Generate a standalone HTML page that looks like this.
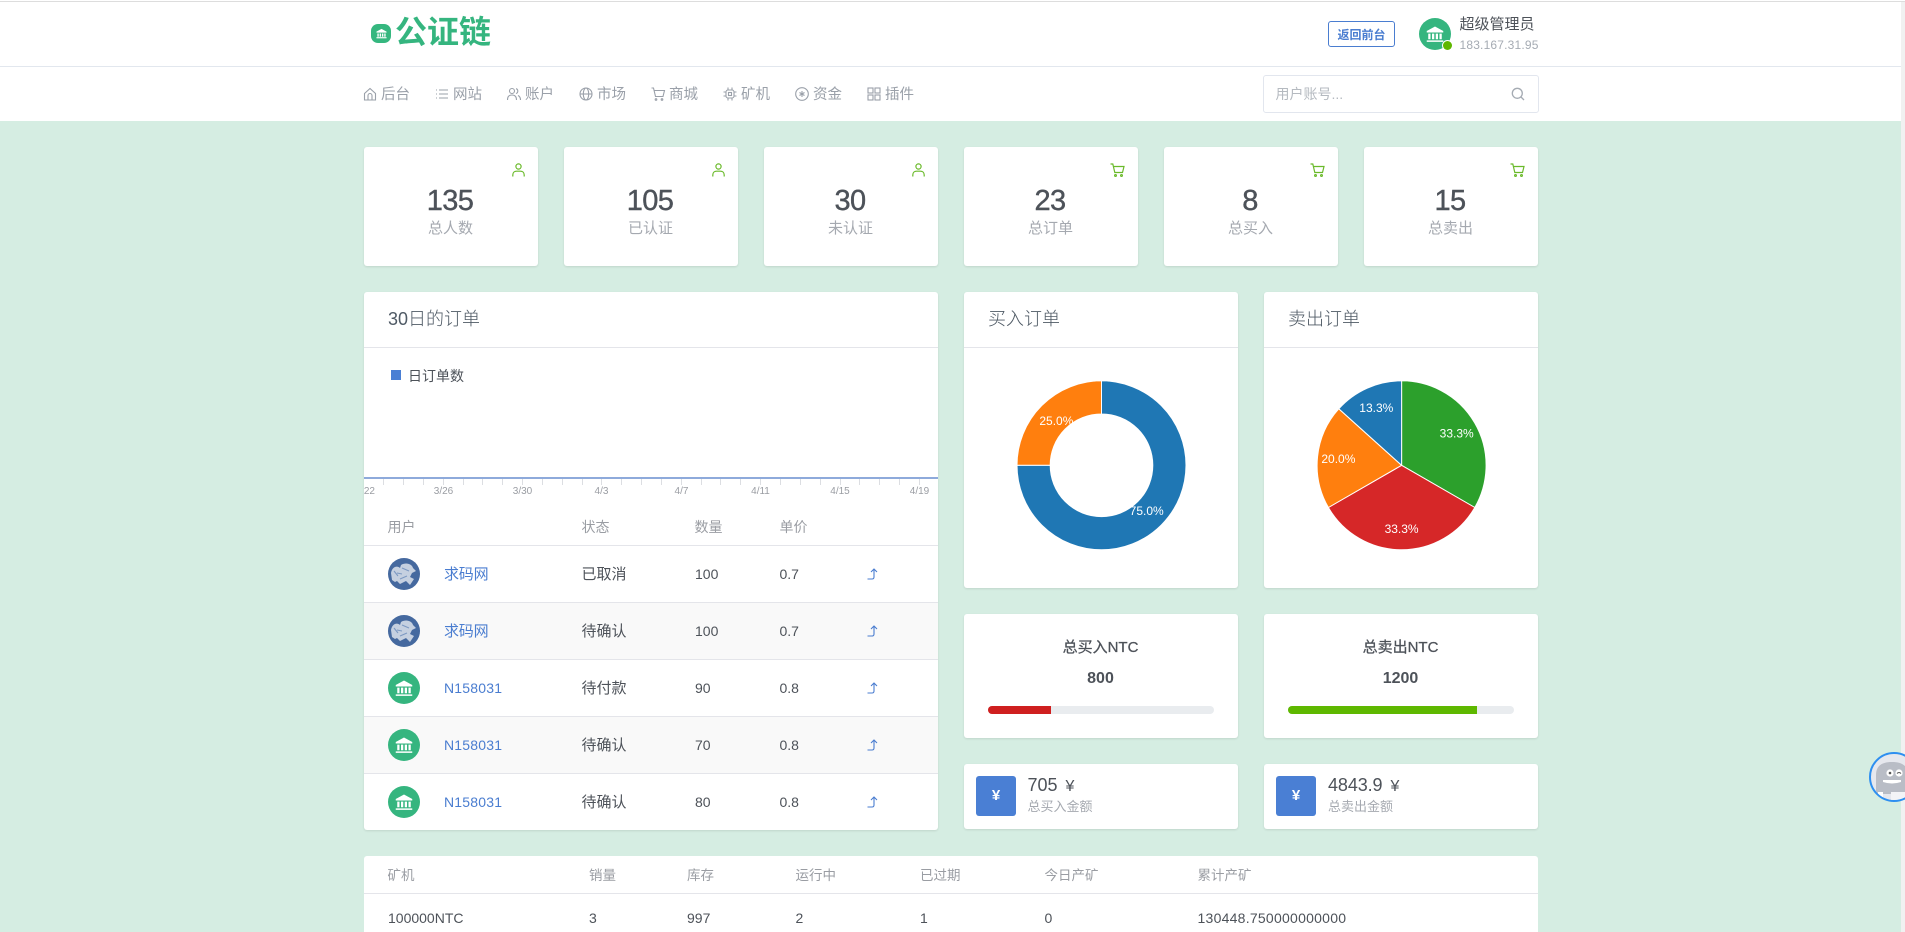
<!DOCTYPE html>
<html lang="zh-CN"><head><meta charset="utf-8"><title>公证链</title>
<style>
*{box-sizing:border-box}
html,body{margin:0;padding:0;width:1905px;height:932px;overflow:hidden;background:#d5ede2;font-family:"Liberation Sans","Noto Sans CJK SC",sans-serif;color:#4d5259}
#p{position:relative;width:1905px;height:932px;overflow:hidden}
.a{position:absolute}
.t{position:absolute;white-space:nowrap;line-height:20px;height:20px}
.c{transform:translateX(-50%)}
.card{position:absolute;background:#fff;border-radius:3px;box-shadow:0 1px 2px rgba(0,0,0,.1)}
.nav{font-size:14.5px;color:#9aa0a9;top:85px}
.num{font-size:29px;letter-spacing:-.6px;line-height:30px;height:30px;-webkit-text-stroke:.4px #4d5259;top:186px}
.lab{font-size:15px;color:#a5a9b0;top:219px}
.h{font-size:18px;color:#4f5a65;font-weight:300;top:309px}
.th{font-size:14px;color:#9a9da3}
.td{font-size:14px;color:#4d5259}
.lk{font-size:14px;color:#4a7dd0;letter-spacing:.3px}
.i{top:86.5px}
svg{position:absolute;overflow:visible}
.ln{position:absolute;height:1px;background:#e4e5ea}
</style></head><body><div id="p">
<div class="a" style="left:0;top:0;width:1905px;height:121px;background:#fff"></div>
<div class="a" style="left:0;top:1px;width:1905px;height:1px;background:#ddd"></div>
<div class="a" style="left:0;top:66px;width:1905px;height:1px;background:#e2e7ee"></div>

<!-- logo -->
<div class="a" style="left:371px;top:24px;width:20px;height:19px;background:#35b77f;border-radius:7px"></div>
<svg style="left:375.5px;top:28px" width="11" height="11" viewBox="0 0 24 24" fill="#fff"><path d="M12 2L23 8V10H1V8Z"/><rect x="3" y="12" width="3" height="7"/><rect x="8" y="12" width="3" height="7"/><rect x="13" y="12" width="3" height="7"/><rect x="18" y="12" width="3" height="7"/><rect x="1" y="20" width="22" height="2.5"/></svg>
<div class="t" style="left:395px;top:12px;height:40px;line-height:40px;font-size:32px;font-weight:700;color:#35b57f">公证链</div>

<!-- header right -->
<div class="a" style="left:1328px;top:21px;width:67px;height:26px;border:1px solid #4a7dd0;border-radius:3px"></div>
<div class="t c" style="left:1361.5px;top:25px;font-size:12px;font-weight:700;color:#4a7dd0">返回前台</div>
<div class="a" style="left:1419px;top:18px;width:32px;height:32px;border-radius:50%;background:#35b57f"></div>
<svg style="left:1426px;top:25px" width="18" height="18" viewBox="0 0 24 24" fill="#fff"><path d="M12 2L23 8V10H1V8Z"/><rect x="3" y="11.5" width="3" height="7.5"/><rect x="8" y="11.5" width="3" height="7.5"/><rect x="13" y="11.5" width="3" height="7.5"/><rect x="18" y="11.5" width="3" height="7.5"/><rect x="1" y="20.5" width="22" height="2"/></svg>
<div class="a" style="left:1443px;top:41px;width:9px;height:9px;border-radius:50%;background:#5fb700;box-shadow:0 0 0 1px #fff"></div>
<div class="t" style="left:1459.5px;top:15px;font-size:15px;color:#4d5259">超级管理员</div>
<div class="t" style="left:1459.5px;top:35px;font-size:12px;letter-spacing:.18px;color:#a5abb3">183.167.31.95</div>

<!-- nav -->
<svg class="i" style="left:362.5px" width="14" height="14" viewBox="0 0 14 14" fill="none" stroke="#9aa0a9" stroke-width="1.1"><path d="M1.5 6.5L7 1.5L12.5 6.5V13H1.5Z"/><path d="M5 13V8.5a2 2 0 0 1 4 0V13"/></svg>
<div class="t nav" style="left:381px">后台</div>
<svg class="i" style="left:434.5px" width="14" height="14" viewBox="0 0 14 14" fill="none" stroke="#9aa0a9" stroke-width="1.1"><path d="M1 3h1M1 7h1M1 11h1M4 3h9M4 7h9M4 11h9"/></svg>
<div class="t nav" style="left:453px">网站</div>
<svg class="i" style="left:506.5px" width="14" height="14" viewBox="0 0 14 14" fill="none" stroke="#9aa0a9" stroke-width="1.1"><circle cx="5" cy="4" r="2.5"/><path d="M.5 13c0-4 2-5 4.5-5s4.5 1 4.5 5M9 1.7a2.5 2.5 0 0 1 0 4.8M11 8.5c1.5.7 2.5 2 2.5 4.5"/></svg>
<div class="t nav" style="left:525px">账户</div>
<svg class="i" style="left:578.5px" width="14" height="14" viewBox="0 0 14 14" fill="none" stroke="#9aa0a9" stroke-width="1.1"><circle cx="7" cy="7" r="6"/><ellipse cx="7" cy="7" rx="2.7" ry="6"/><path d="M1 7H13"/></svg>
<div class="t nav" style="left:597px">市场</div>
<svg class="i" style="left:650.5px" width="14" height="14" viewBox="0 0 14 14" fill="none" stroke="#9aa0a9" stroke-width="1.1"><path d="M.5 1H2.5L4.5 9.5H12L13.5 3.5H3"/><circle cx="5" cy="12.5" r=".8"/><circle cx="11" cy="12.5" r=".8"/></svg>
<div class="t nav" style="left:669px">商城</div>
<svg class="i" style="left:723px" width="14" height="14" viewBox="0 0 14 14" fill="none" stroke="#9aa0a9" stroke-width="1.1"><rect x="3" y="3" width="8" height="8" rx="2"/><rect x="5.5" y="5.5" width="3" height="3"/><path d="M5 .5V3M9 .5V3M5 11V13.5M9 11V13.5M.5 5H3M.5 9H3M11 5H13.5M11 9H13.5"/></svg>
<div class="t nav" style="left:741px">矿机</div>
<svg class="i" style="left:794.5px" width="14" height="14" viewBox="0 0 14 14" fill="none" stroke="#9aa0a9" stroke-width="1.1"><circle cx="7" cy="7" r="6.3"/><path d="M7 4V10M4.5 5.5L9.5 8.5M9.5 5.5L4.5 8.5"/></svg>
<div class="t nav" style="left:813px">资金</div>
<svg class="i" style="left:867px" width="14" height="14" viewBox="0 0 14 14" fill="none" stroke="#9aa0a9" stroke-width="1.1"><rect x="1" y="1" width="5" height="5"/><rect x="8" y="1" width="5" height="5"/><rect x="1" y="8" width="5" height="5"/><rect x="8" y="8" width="5" height="5"/></svg>
<div class="t nav" style="left:885px">插件</div>

<!-- search -->
<div class="a" style="left:1263px;top:75px;width:276px;height:38px;border:1px solid #e2e6ee;border-radius:3px;background:#fff"></div>
<div class="t" style="left:1275.5px;top:84px;font-size:14px;color:#b5bac0">用户账号...</div>
<svg style="left:1511px;top:87px" width="14" height="14" viewBox="0 0 14 14" fill="none" stroke="#a5abb3" stroke-width="1.3"><circle cx="6.3" cy="6.3" r="5"/><path d="M10 10L13 13"/></svg>

<!-- stat cards -->
<div class="card" style="left:364px;top:147px;width:174px;height:119px"></div>
<div class="card" style="left:564px;top:147px;width:174px;height:119px"></div>
<div class="card" style="left:764px;top:147px;width:174px;height:119px"></div>
<div class="card" style="left:964px;top:147px;width:174px;height:119px"></div>
<div class="card" style="left:1164px;top:147px;width:174px;height:119px"></div>
<div class="card" style="left:1364px;top:147px;width:174px;height:119px"></div>

<svg style="left:512px;top:163px" width="13" height="14" viewBox="0 0 13 14" fill="none" stroke="#6aba2a" stroke-width="1.2"><circle cx="6.5" cy="3.5" r="2.6"/><path d="M.8 13.5V12C.8 9.5 2.5 8.2 4.5 8.2H8.5C10.5 8.2 12.2 9.5 12.2 12V13.5"/></svg>
<svg style="left:712px;top:163px" width="13" height="14" viewBox="0 0 13 14" fill="none" stroke="#6aba2a" stroke-width="1.2"><circle cx="6.5" cy="3.5" r="2.6"/><path d="M.8 13.5V12C.8 9.5 2.5 8.2 4.5 8.2H8.5C10.5 8.2 12.2 9.5 12.2 12V13.5"/></svg>
<svg style="left:912px;top:163px" width="13" height="14" viewBox="0 0 13 14" fill="none" stroke="#6aba2a" stroke-width="1.2"><circle cx="6.5" cy="3.5" r="2.6"/><path d="M.8 13.5V12C.8 9.5 2.5 8.2 4.5 8.2H8.5C10.5 8.2 12.2 9.5 12.2 12V13.5"/></svg>
<svg style="left:1110px;top:163px" width="15" height="14" viewBox="0 0 15 14" fill="none" stroke="#6aba2a" stroke-width="1.2"><path d="M.5 1H2.8L4.8 9.5H12.5L14 3.5H3.4"/><circle cx="5.5" cy="12.5" r=".9"/><circle cx="11.5" cy="12.5" r=".9"/></svg>
<svg style="left:1310px;top:163px" width="15" height="14" viewBox="0 0 15 14" fill="none" stroke="#6aba2a" stroke-width="1.2"><path d="M.5 1H2.8L4.8 9.5H12.5L14 3.5H3.4"/><circle cx="5.5" cy="12.5" r=".9"/><circle cx="11.5" cy="12.5" r=".9"/></svg>
<svg style="left:1510px;top:163px" width="15" height="14" viewBox="0 0 15 14" fill="none" stroke="#6aba2a" stroke-width="1.2"><path d="M.5 1H2.8L4.8 9.5H12.5L14 3.5H3.4"/><circle cx="5.5" cy="12.5" r=".9"/><circle cx="11.5" cy="12.5" r=".9"/></svg>

<div class="t c num" style="left:450px">135</div><div class="t c lab" style="left:450.5px">总人数</div>
<div class="t c num" style="left:650px">105</div><div class="t c lab" style="left:650.5px">已认证</div>
<div class="t c num" style="left:850px">30</div><div class="t c lab" style="left:850.5px">未认证</div>
<div class="t c num" style="left:1050px">23</div><div class="t c lab" style="left:1050.5px">总订单</div>
<div class="t c num" style="left:1250px">8</div><div class="t c lab" style="left:1250.5px">总买入</div>
<div class="t c num" style="left:1450px">15</div><div class="t c lab" style="left:1450.5px">总卖出</div>

<!-- order card -->
<div class="card" style="left:364px;top:292px;width:574px;height:538px"></div>
<div class="ln" style="left:364px;top:347px;width:574px"></div>
<div class="t h" style="left:388px">30日的订单</div>
<div class="a" style="left:391px;top:370px;width:10px;height:10px;background:#4a7fd4"></div>
<div class="t" style="left:408px;top:366px;font-size:14px;color:#4d5259">日订单数</div>
<div class="a" style="left:364px;top:477px;width:574px;height:2px;background:#8eaadb"></div>
<svg style="left:0;top:0" width="1905" height="932" fill="none" stroke="#dcdee2" stroke-width="1"><path d="M383.5 479v6M403.5 479v6M423.5 479v6M443.5 479v6M463.5 479v6M482.5 479v6M502.5 479v6M522.5 479v6M542.5 479v6M562.5 479v6M582.5 479v6M601.5 479v6M621.5 479v6M641.5 479v6M661.5 479v6M681.5 479v6M701.5 479v6M720.5 479v6M740.5 479v6M760.5 479v6M780.5 479v6M800.5 479v6M820.5 479v6M840.5 479v6M859.5 479v6M879.5 479v6M899.5 479v6M919.5 479v6"/></svg>
<div class="a" style="left:364px;top:482px;width:574px;height:20px;overflow:hidden;font-size:10px;color:#9a9da3;line-height:20px">
<span class="a" style="left:-8.5px;top:0;">3/22</span>
</div>
<div class="t c" style="left:443.5px;top:482px;font-size:10px;color:#9a9da3">3/26</div>
<div class="t c" style="left:522.5px;top:482px;font-size:10px;color:#9a9da3">3/30</div>
<div class="t c" style="left:601.5px;top:482px;font-size:10px;color:#9a9da3">4/3</div>
<div class="t c" style="left:681.5px;top:482px;font-size:10px;color:#9a9da3">4/7</div>
<div class="t c" style="left:760.5px;top:482px;font-size:10px;color:#9a9da3">4/11</div>
<div class="t c" style="left:840px;top:482px;font-size:10px;color:#9a9da3">4/15</div>
<div class="t c" style="left:919.5px;top:482px;font-size:10px;color:#9a9da3">4/19</div>

<div class="t th" style="left:387.5px;top:517px">用户</div>
<div class="t th" style="left:581.5px;top:517px">状态</div>
<div class="t th" style="left:694.5px;top:517px">数量</div>
<div class="t th" style="left:779.5px;top:517px">单价</div>

<div class="a" style="left:364px;top:603px;width:574px;height:56px;background:#f9f9f9"></div>
<div class="a" style="left:364px;top:717px;width:574px;height:56px;background:#f9f9f9"></div>
<div class="ln" style="left:364px;top:545px;width:574px"></div>
<div class="ln" style="left:364px;top:602px;width:574px"></div>
<div class="ln" style="left:364px;top:659px;width:574px"></div>
<div class="ln" style="left:364px;top:716px;width:574px"></div>
<div class="ln" style="left:364px;top:773px;width:574px"></div>

<svg style="left:388px;top:558px" width="32" height="32" viewBox="0 0 32 32"><circle cx="16" cy="16" r="16" fill="#45699f"/><path d="M3 15C4 9 9 7 12 10L13 7C18 4 24 6 25 10L28 13 24 15 22 19 26 21 22 27 18 23 12 26 9 23 7 24 4 22Z" fill="#c5d0e0"/><path d="M6 13L10 18M14 10L21 13M12 21L19 18M9 15L14 16" stroke="#7d99c2" stroke-width="1.1" fill="none"/></svg>
<svg style="left:388px;top:615px" width="32" height="32" viewBox="0 0 32 32"><circle cx="16" cy="16" r="16" fill="#45699f"/><path d="M3 15C4 9 9 7 12 10L13 7C18 4 24 6 25 10L28 13 24 15 22 19 26 21 22 27 18 23 12 26 9 23 7 24 4 22Z" fill="#c5d0e0"/><path d="M6 13L10 18M14 10L21 13M12 21L19 18M9 15L14 16" stroke="#7d99c2" stroke-width="1.1" fill="none"/></svg>

<svg style="left:388px;top:672px" width="32" height="32" viewBox="0 0 32 32"><circle cx="16" cy="16" r="16" fill="#35b57f"/><g transform="translate(7 7) scale(.75)" fill="#fff"><path d="M12 2L23 8V10H1V8Z"/><rect x="3" y="11.5" width="3" height="7.5"/><rect x="8" y="11.5" width="3" height="7.5"/><rect x="13" y="11.5" width="3" height="7.5"/><rect x="18" y="11.5" width="3" height="7.5"/><rect x="1" y="20.5" width="22" height="2"/></g></svg>
<svg style="left:388px;top:729px" width="32" height="32" viewBox="0 0 32 32"><circle cx="16" cy="16" r="16" fill="#35b57f"/><g transform="translate(7 7) scale(.75)" fill="#fff"><path d="M12 2L23 8V10H1V8Z"/><rect x="3" y="11.5" width="3" height="7.5"/><rect x="8" y="11.5" width="3" height="7.5"/><rect x="13" y="11.5" width="3" height="7.5"/><rect x="18" y="11.5" width="3" height="7.5"/><rect x="1" y="20.5" width="22" height="2"/></g></svg>
<svg style="left:388px;top:786px" width="32" height="32" viewBox="0 0 32 32"><circle cx="16" cy="16" r="16" fill="#35b57f"/><g transform="translate(7 7) scale(.75)" fill="#fff"><path d="M12 2L23 8V10H1V8Z"/><rect x="3" y="11.5" width="3" height="7.5"/><rect x="8" y="11.5" width="3" height="7.5"/><rect x="13" y="11.5" width="3" height="7.5"/><rect x="18" y="11.5" width="3" height="7.5"/><rect x="1" y="20.5" width="22" height="2"/></g></svg>

<div class="t lk" style="left:444px;top:565px;letter-spacing:-.2px;font-size:15px">求码网</div><div class="t td" style="left:581.5px;top:565px;font-size:15px">已取消</div><div class="t td" style="left:695px;top:564px">100</div><div class="t td" style="left:779.5px;top:564px">0.7</div>
<div class="t lk" style="left:444px;top:622px;letter-spacing:-.2px;font-size:15px">求码网</div><div class="t td" style="left:581.5px;top:622px;font-size:15px">待确认</div><div class="t td" style="left:695px;top:621px">100</div><div class="t td" style="left:779.5px;top:621px">0.7</div>
<div class="t lk" style="left:444px;top:678px;letter-spacing:.2px">N158031</div><div class="t td" style="left:581.5px;top:679px;font-size:15px">待付款</div><div class="t td" style="left:695px;top:678px">90</div><div class="t td" style="left:779.5px;top:678px">0.8</div>
<div class="t lk" style="left:444px;top:735px;letter-spacing:.2px">N158031</div><div class="t td" style="left:581.5px;top:736px;font-size:15px">待确认</div><div class="t td" style="left:695px;top:735px">70</div><div class="t td" style="left:779.5px;top:735px">0.8</div>
<div class="t lk" style="left:444px;top:792px;letter-spacing:.2px">N158031</div><div class="t td" style="left:581.5px;top:793px;font-size:15px">待确认</div><div class="t td" style="left:695px;top:792px">80</div><div class="t td" style="left:779.5px;top:792px">0.8</div>

<svg style="left:866.5px;top:568px" width="12" height="12" viewBox="0 0 12 12" fill="none" stroke="#4a7dd0" stroke-width="1.1"><path d="M.5 11H5Q7 11 7 9V1M4 4L7 1L10 4"/></svg>
<svg style="left:866.5px;top:625px" width="12" height="12" viewBox="0 0 12 12" fill="none" stroke="#4a7dd0" stroke-width="1.1"><path d="M.5 11H5Q7 11 7 9V1M4 4L7 1L10 4"/></svg>
<svg style="left:866.5px;top:682px" width="12" height="12" viewBox="0 0 12 12" fill="none" stroke="#4a7dd0" stroke-width="1.1"><path d="M.5 11H5Q7 11 7 9V1M4 4L7 1L10 4"/></svg>
<svg style="left:866.5px;top:739px" width="12" height="12" viewBox="0 0 12 12" fill="none" stroke="#4a7dd0" stroke-width="1.1"><path d="M.5 11H5Q7 11 7 9V1M4 4L7 1L10 4"/></svg>
<svg style="left:866.5px;top:796px" width="12" height="12" viewBox="0 0 12 12" fill="none" stroke="#4a7dd0" stroke-width="1.1"><path d="M.5 11H5Q7 11 7 9V1M4 4L7 1L10 4"/></svg>

<!-- chart cards -->
<div class="card" style="left:964px;top:292px;width:274px;height:296px"></div>
<div class="card" style="left:1264px;top:292px;width:274px;height:296px"></div>
<div class="ln" style="left:964px;top:347px;width:274px"></div>
<div class="ln" style="left:1264px;top:347px;width:274px"></div>
<div class="t h" style="left:988px">买入订单</div>
<div class="t h" style="left:1288px">卖出订单</div>

<svg style="left:0;top:0" width="1905" height="932" stroke="#fff" stroke-width="1" font-family="Liberation Sans" font-size="12">
<path fill="#1f77b4" d="M1101.5 380.8A84.5 84.5 0 1 1 1017 465.3L1050.2 465.3A51.3 51.3 0 1 0 1101.5 414Z"/>
<path fill="#ff7f0e" d="M1017 465.3A84.5 84.5 0 0 1 1101.5 380.8L1101.5 414A51.3 51.3 0 0 0 1050.2 465.3Z"/>
<path fill="#2ca02c" d="M1401.6 465.3V380.8A84.5 84.5 0 0 1 1474.8 507.5Z"/>
<path fill="#d62728" d="M1401.6 465.3L1474.8 507.5A84.5 84.5 0 0 1 1328.4 507.5Z"/>
<path fill="#ff7f0e" d="M1401.6 465.3L1328.4 507.5A84.5 84.5 0 0 1 1338.8 408.8Z"/>
<path fill="#1f77b4" d="M1401.6 465.3L1338.8 408.8A84.5 84.5 0 0 1 1401.6 380.8Z"/>
<g fill="#fff" stroke="none" text-anchor="middle">
<text x="1056.4" y="425">25.0%</text>
<text x="1146.7" y="515">75.0%</text>
<text x="1456.7" y="437.5">33.3%</text>
<text x="1401.6" y="533">33.3%</text>
<text x="1338.4" y="463">20.0%</text>
<text x="1376.3" y="412">13.3%</text>
</g></svg>

<!-- NTC cards -->
<div class="card" style="left:964px;top:614px;width:274px;height:124px"></div>
<div class="card" style="left:1264px;top:614px;width:274px;height:124px"></div>
<div class="t c" style="left:1100.5px;top:638px;font-size:15px;color:#4d5259;-webkit-text-stroke:.25px #4d5259">总买入NTC</div>
<div class="t c" style="left:1400.5px;top:638px;font-size:15px;color:#4d5259;-webkit-text-stroke:.25px #4d5259">总卖出NTC</div>
<div class="t c" style="left:1100.5px;top:669px;font-size:16px;font-weight:700;color:#4d5259">800</div>
<div class="t c" style="left:1400.5px;top:669px;font-size:16px;font-weight:700;color:#4d5259">1200</div>
<div class="a" style="left:988px;top:706px;width:226px;height:8px;border-radius:4px;background:#e9ecef;overflow:hidden"><div style="width:63px;height:8px;background:#cf1f1f"></div></div>
<div class="a" style="left:1288px;top:706px;width:226px;height:8px;border-radius:4px;background:#e9ecef;overflow:hidden"><div style="width:189px;height:8px;background:#5eb800"></div></div>

<!-- amount cards -->
<div class="card" style="left:964px;top:764px;width:274px;height:65px"></div>
<div class="card" style="left:1264px;top:764px;width:274px;height:65px"></div>
<div class="a" style="left:976px;top:776px;width:40px;height:40px;background:#4a7fd4;border-radius:3px"></div>
<div class="a" style="left:1276px;top:776px;width:40px;height:40px;background:#4a7fd4;border-radius:3px"></div>
<div class="t c" style="left:996px;top:786px;font-size:15px;font-weight:700;color:#fff">¥</div>
<div class="t c" style="left:1296px;top:786px;font-size:15px;font-weight:700;color:#fff">¥</div>
<div class="t" style="left:1027.5px;top:775px;font-size:18px;color:#4d5259">705</div>
<div class="t" style="left:1065.5px;top:777px;font-size:16px;color:#4d5259">¥</div>
<div class="t" style="left:1027.5px;top:797px;font-size:13px;color:#a5a9b0">总买入金额</div>
<div class="t" style="left:1328px;top:775px;font-size:18px;letter-spacing:-.1px;color:#4d5259">4843.9</div>
<div class="t" style="left:1390.5px;top:777px;font-size:16px;color:#4d5259">¥</div>
<div class="t" style="left:1328px;top:797px;font-size:13px;color:#a5a9b0">总卖出金额</div>

<!-- bottom table -->
<div class="card" style="left:364px;top:856px;width:1174px;height:76px;border-radius:3px 3px 0 0;box-shadow:none"></div>
<div class="ln" style="left:364px;top:893px;width:1174px"></div>
<div class="t th" style="left:387.5px;top:866px;font-size:13.5px">矿机</div>
<div class="t th" style="left:589px;top:866px;font-size:13.5px">销量</div>
<div class="t th" style="left:687px;top:866px;font-size:13.5px">库存</div>
<div class="t th" style="left:795.5px;top:866px;font-size:13.5px">运行中</div>
<div class="t th" style="left:920px;top:866px;font-size:13.5px">已过期</div>
<div class="t th" style="left:1044.5px;top:866px;font-size:13.5px">今日产矿</div>
<div class="t th" style="left:1197.5px;top:866px;font-size:13.5px">累计产矿</div>
<div class="t td" style="left:388px;top:908px">100000NTC</div>
<div class="t td" style="left:589px;top:908px">3</div>
<div class="t td" style="left:687px;top:908px">997</div>
<div class="t td" style="left:795.5px;top:908px">2</div>
<div class="t td" style="left:920px;top:908px">1</div>
<div class="t td" style="left:1044.5px;top:908px">0</div>
<div class="t td" style="left:1197.5px;top:908px;letter-spacing:.25px">130448.750000000000</div>

<!-- scrollbar strip -->
<div class="a" style="left:1901px;top:2px;width:4px;height:930px;background:#f1f1f1"></div>

<!-- floating robot -->
<div class="a" style="left:1869px;top:752px;width:50px;height:50px;border-radius:50%;border:2px solid #2e8ff0;background:#e6e8ee;overflow:hidden">
<svg style="left:0;top:0" width="46" height="46" viewBox="0 0 46 46"><path d="M5 40V21C5 11 12 8 21 8S37 11 37 21V40Z" fill="#b9bdc6"/><circle cx="19" cy="19" r="3.6" fill="#fff"/><circle cx="28" cy="19" r="3.6" fill="#fff"/><circle cx="19" cy="19" r="1.3" fill="#555"/><path d="M26 19.5Q28 17.5 30 19.5" stroke="#555" stroke-width="1" fill="none"/><path d="M12 26H30V28Q21 31 12 28Z" fill="#fff"/><rect x="7" y="38" width="5" height="9" fill="#fff"/><rect x="20" y="38" width="14" height="9" fill="#f3f4f7"/></svg>
</div>
</div></body></html>
